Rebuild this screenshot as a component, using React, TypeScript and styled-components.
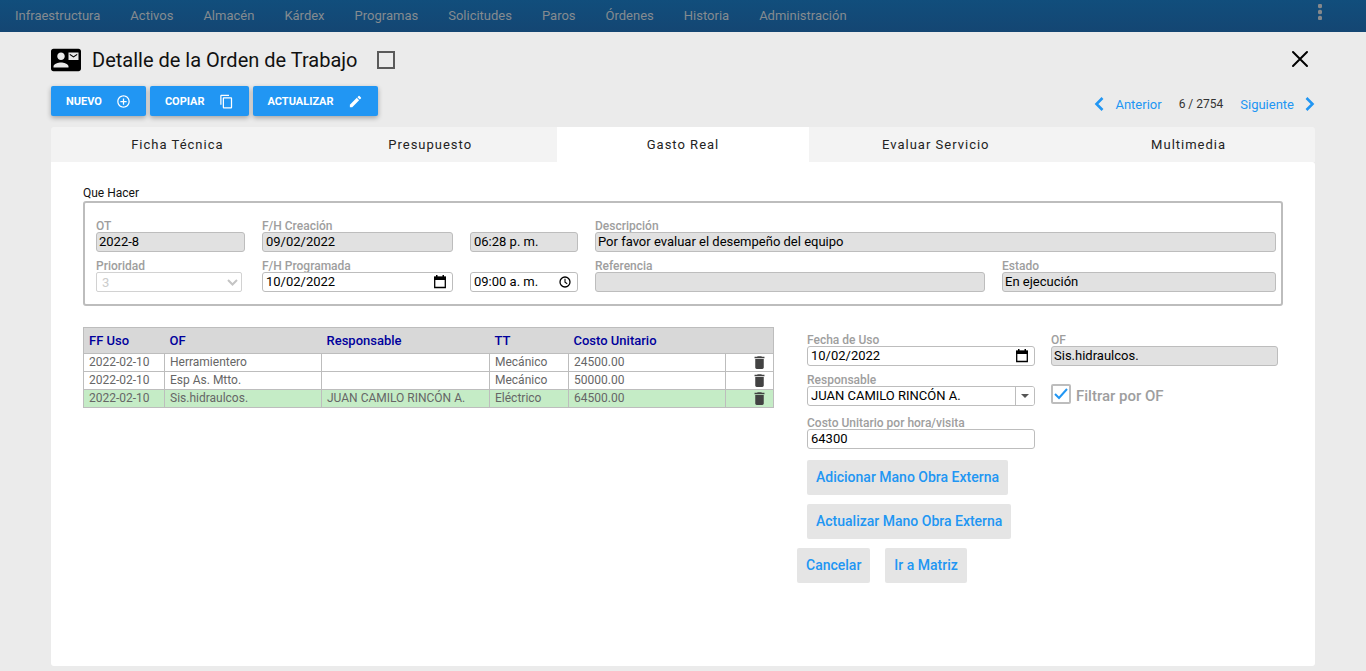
import React from "react";
import styled, { createGlobalStyle } from "styled-components";
import {
  MdContactMail,
  MdContentCopy,
  MdControlPoint,
  MdDelete,
  MdEdit,
} from "react-icons/md";

const GlobalStyle = createGlobalStyle`
  *, *::before, *::after { box-sizing: border-box; }
  body {
    margin: 0;
    background: #ebebeb;
    color: #111;
    font-family: Roboto, "Liberation Sans", sans-serif;
    font-size: 13px;
  }
  button, input, select { font-family: inherit; margin: 0; }
`;

const Page = styled.div`
  display: flex;
  flex-direction: column;
  min-height: 100vh;
`;

const NavBar = styled.nav`
  display: flex;
  align-items: center;
  gap: 30px;
  height: 32px;
  padding: 0 43px 0 15px;
  background: linear-gradient(#114e7c, #144673);
`;

const NavLink = styled.a`
  color: #858b90;
  font-weight: 400;
  line-height: 16px;
  text-decoration: none;
  white-space: nowrap;
`;

const MoreButton = styled.button`
  display: flex;
  align-self: flex-start;
  margin-left: auto;
  padding: 4px 1px;
  border: 0;
  background: none;
  color: #85888b;
`;

const Main = styled.main`
  display: flex;
  flex: 1;
  flex-direction: column;
  padding: 12px 51px 5px;
`;

const TitleRow = styled.header`
  display: flex;
  align-items: center;
  height: 32px;
`;

const Title = styled.h1`
  margin: 0 20px 0 11px;
  font-size: 20px;
  font-weight: 400;
  line-height: 24px;
`;

const TitleCheck = styled.input`
  appearance: none;
  width: 18px;
  height: 18px;
  border: 2px solid #5a5a5a;
`;

const CloseButton = styled.button`
  display: flex;
  margin-left: auto;
  padding: 4px 6px 7px;
  border: 0;
  background: none;
  color: #000;
`;

const Toolbar = styled.div`
  display: flex;
  align-items: flex-end;
  gap: 4px;
  margin: 10px 0 11px;
`;

const ActionButton = styled.button`
  display: flex;
  align-items: center;
  gap: 14px;
  height: 30px;
  padding: 0 15px;
  border: 0;
  border-radius: 2px;
  background: #2196f3;
  box-shadow: 0 2px 5px rgba(0, 0, 0, 0.3);
  color: #fff;
  font-size: 11px;
  font-weight: 700;
  text-transform: uppercase;
`;

const Pager = styled.div`
  display: flex;
  align-items: center;
  gap: 17px;
  height: 24px;
  margin-left: auto;
`;

const PagerLink = styled.a`
  display: flex;
  align-items: center;
  gap: 11px;
  color: #2196f3;
  font-size: 13px;
  font-weight: 400;
  text-decoration: none;
`;

const PagerCount = styled.span`
  color: #333;
  font-size: 12px;
`;

const TabBar = styled.div`
  display: grid;
  grid-template-columns: repeat(5, 1fr);
  height: 35px;
  overflow: hidden;
  border-radius: 3px 3px 0 0;
  background: #f3f3f3;
`;

const Tab = styled.button<{ $active?: boolean }>`
  border: 0;
  background: ${(p) => (p.$active ? "#fff" : "transparent")};
  color: #222;
  font-size: 13px;
  letter-spacing: 1px;
`;

const Panel = styled.section`
  flex: 1;
  padding: 24px 32px;
  border-radius: 0 3px 3px 3px;
  background: #fff;
`;

const GroupTitle = styled.h2`
  margin: 0 0 1px;
  font-size: 12px;
  font-weight: 400;
  line-height: 14px;
`;

const OrderBox = styled.div`
  display: grid;
  grid-template-columns: 149px 191px 108px minmax(0, 390fr) minmax(0, 274fr);
  gap: 7px 17px;
  align-items: end;
  padding: 16px 5px 12px 11px;
  border: 2px solid #bdbdbd;
  border-radius: 3px;
`;

const Field = styled.div<{ $wide?: boolean }>`
  display: flex;
  flex-direction: column;
  grid-column: ${(p) => (p.$wide ? "span 2" : "auto")};
  min-width: 0;
`;

const Label = styled.label`
  height: 13px;
  color: #9e9e9e;
  font-size: 12px;
  font-weight: 500;
  line-height: 15px;
`;

const Control = styled.div<{ $filled?: boolean }>`
  display: flex;
  align-items: center;
  height: 20px;
  overflow: hidden;
  border: 1px solid #bdbdbd;
  border-radius: 3px;
  background: ${(p) => (p.$filled ? "#e1e1e1" : "#fff")};
`;

const TextInput = styled.input<{ $indent?: boolean }>`
  flex: 1;
  min-width: 0;
  height: 18px;
  padding: 0 ${(p) => (p.$indent ? 3 : 2)}px 2px;
  border: 0;
  outline: 0;
  background: transparent;
  color: #000;
  font-size: 13px;
`;

const PickerButton = styled.button`
  display: flex;
  padding: 0 5px 1px;
  border: 0;
  background: none;
  color: #000;
`;

const DropButton = styled.button`
  display: flex;
  align-items: center;
  justify-content: center;
  width: 19px;
  height: 18px;
  padding: 0;
  border: 0;
  border-left: 1px solid #bdbdbd;
  background: #fff;
  color: #555;
`;

const PriorityControl = styled.div`
  display: grid;
  align-items: center;
  width: 146px;
  color: #c4c4c4;

  > * { grid-area: 1 / 1; }
  > svg { justify-self: end; margin-right: 4px; }
`;

const PrioritySelect = styled.select`
  appearance: none;
  width: 100%;
  height: 20px;
  padding: 0 5px;
  border: 1px solid #d2d2d2;
  border-radius: 2px;
  background: #fff;
  color: #ccc;
  font-size: 13px;
  opacity: 1;
`;

const Costs = styled.div`
  display: grid;
  grid-template-columns: minmax(0, 1fr) 228px 227px;
  align-items: start;
  column-gap: 16px;
  margin-top: 21px;
  padding-right: 5px;
`;

const TableWrap = styled.div`
  padding-right: 18px;
`;

const CostTable = styled.table`
  width: 100%;
  border: 1px solid #bdbdbd;
  border-collapse: collapse;
  table-layout: fixed;
`;

const HeadCell = styled.th<{ $width: number }>`
  width: ${(p) => p.$width}px;
  height: 26px;
  padding: 0 5px;
  background: #d8d8d8;
  color: #00009c;
  font-size: 13px;
  font-weight: 500;
  text-align: left;
`;

const Row = styled.tr<{ $selected?: boolean }>`
  background: ${(p) => (p.$selected ? "#c5ecc6" : "#fff")};
`;

const Cell = styled.td`
  height: 18px;
  padding: 0 5px 1px;
  overflow: hidden;
  border: 1px solid #bdbdbd;
  color: #666;
  font-size: 12px;
  line-height: 16px;
  white-space: nowrap;
`;

const ActionCell = styled(Cell)`
  padding: 0 5px;
`;

const DeleteButton = styled.button`
  display: flex;
  margin-left: auto;
  padding: 0;
  border: 0;
  background: none;
  color: #424242;
`;

const FormColumn = styled.form`
  display: flex;
  flex-direction: column;
  gap: 7px;
  padding-top: 6px;
`;

const SideColumn = styled.div`
  display: flex;
  flex-direction: column;
  gap: 18px;
  padding-top: 6px;
`;

const CostField = styled(Field)`
  margin-top: 3px;
`;

const FilterRow = styled.label`
  display: flex;
  align-items: flex-start;
  gap: 5px;
  color: #9e9e9e;
  font-size: 15px;
  font-weight: 500;
  line-height: 24px;
`;

const FilterBox = styled.span`
  display: grid;
  place-items: center;
  color: #2196f3;

  > * { grid-area: 1 / 1; }
  > svg { pointer-events: none; }
`;

const FilterCheck = styled.input`
  appearance: none;
  width: 20px;
  height: 20px;
  border: 2px solid #bdbdbd;
  border-radius: 2px;
`;

const Buttons = styled.div`
  display: flex;
  flex-direction: column;
  align-items: flex-start;
  gap: 9px;
  margin-top: 4px;
`;

const ButtonPair = styled.div`
  display: flex;
  gap: 15px;
  margin-left: -10px;
`;

const FlatButton = styled.button`
  height: 35px;
  padding: 0 9px 2px;
  border: 0;
  border-radius: 2px;
  background: #e5e5e5;
  color: #2196f3;
  font-size: 14px;
  font-weight: 500;
  white-space: nowrap;
`;

const CalendarIcon = () => (
  <svg width="14" height="14" viewBox="0 0 14 14" fill="none" aria-hidden="true">
    <path d="M1.7 2.5h10.6v10H1.7z" stroke="currentColor" strokeWidth="1.3" />
    <path d="M1 1.6h12V5H1zM3 0h1.5v2H3zM9.500 0H11v2H9.500z" fill="currentColor" />
  </svg>
);

const ClockIcon = () => (
  <svg width="14" height="14" viewBox="0 0 14 14" fill="none" stroke="currentColor" aria-hidden="true">
    <circle cx="7" cy="7" r="5" strokeWidth="1.3" />
    <path d="M7 3.800V7.300l2.200 1.400" strokeWidth="1.1" />
  </svg>
);

const Chevron = ({ right }: { right?: boolean }) => (
  <svg width="10" height="14" viewBox="0 0 10 14" fill="none" stroke="currentColor" strokeWidth="2.600" aria-hidden="true">
    <path d={right ? "M1.500 1l6 6-6 6" : "M8.500 1l-6 6 6 6"} />
  </svg>
);

const NAV = [
  "Infraestructura", "Activos", "Almacén", "Kárdex", "Programas",
  "Solicitudes", "Paros", "Órdenes", "Historia", "Administración",
];

const TABS = ["Ficha Técnica", "Presupuesto", "Gasto Real", "Evaluar Servicio", "Multimedia"];

const COLUMNS = [
  { name: "FF Uso", width: 81 },
  { name: "OF", width: 157 },
  { name: "Responsable", width: 168 },
  { name: "TT", width: 79 },
  { name: "Costo Unitario", width: 157 },
  { name: "", width: 48 },
];

const ROWS = [
  ["2022-02-10", "Herramientero", "", "Mecánico", "24500.00"],
  ["2022-02-10", "Esp As. Mtto.", "", "Mecánico", "50000.00"],
  ["2022-02-10", "Sis.hidraulcos.", "JUAN CAMILO RINCÓN A.", "Eléctrico", "64500.00"],
];

type TextFieldProps = {
  id: string;
  label?: string;
  name?: string;
  value: string;
  filled?: boolean;
  wide?: boolean;
  indent?: boolean;
  picker?: "calendar" | "clock";
};

function TextField({ id, label, name, value, filled, wide, indent, picker }: TextFieldProps) {
  return (
    <Field $wide={wide}>
      {label && <Label htmlFor={id}>{label}</Label>}
      <Control $filled={filled}>
        <TextInput
          id={id}
          type="text"
          aria-label={name}
          defaultValue={value}
          readOnly={filled}
          $indent={indent}
        />
        {picker && (
          <PickerButton type="button" aria-label={picker === "clock" ? "Elegir hora" : "Elegir fecha"}>
            {picker === "clock" ? <ClockIcon /> : <CalendarIcon />}
          </PickerButton>
        )}
      </Control>
    </Field>
  );
}

export default function App() {
  return (
    <Page>
      <GlobalStyle />
      <NavBar>
        {NAV.map((item) => (
          <NavLink key={item} href="#">{item}</NavLink>
        ))}
        <MoreButton aria-label="Más opciones">
          <svg width="4" height="16" viewBox="0 0 4 16" fill="currentColor" aria-hidden="true">
            <circle cx="2" cy="2" r="2.200" />
            <circle cx="2" cy="8" r="2.200" />
            <circle cx="2" cy="14" r="2.200" />
          </svg>
        </MoreButton>
      </NavBar>

      <Main>
        <TitleRow>
          <MdContactMail size={30} color="#000" aria-hidden="true" />
          <Title>Detalle de la Orden de Trabajo</Title>
          <TitleCheck type="checkbox" aria-label="Seleccionar orden" />
          <CloseButton aria-label="Cerrar">
            <svg width="18" height="18" viewBox="0 0 18 18" fill="none" stroke="currentColor" strokeWidth="2" strokeLinecap="round" aria-hidden="true">
              <path d="M2 2l14 14M16 2L2 16" />
            </svg>
          </CloseButton>
        </TitleRow>

        <Toolbar>
          <ActionButton>Nuevo<MdControlPoint size={15} /></ActionButton>
          <ActionButton>Copiar<MdContentCopy size={15} /></ActionButton>
          <ActionButton>Actualizar<MdEdit size={15} /></ActionButton>
          <Pager>
            <PagerLink href="#"><Chevron />Anterior</PagerLink>
            <PagerCount>6 / 2754</PagerCount>
            <PagerLink href="#">Siguiente<Chevron right /></PagerLink>
          </Pager>
        </Toolbar>

        <TabBar role="tablist">
          {TABS.map((tab) => (
            <Tab key={tab} role="tab" aria-selected={tab === "Gasto Real"} $active={tab === "Gasto Real"}>
              {tab}
            </Tab>
          ))}
        </TabBar>

        <Panel>
          <GroupTitle>Que Hacer</GroupTitle>
          <OrderBox>
            <TextField id="ot" label="OT" value="2022-8" filled />
            <TextField id="created" label="F/H Creación" value="09/02/2022" filled indent />
            <TextField id="created-time" name="Hora de creación" value="06:28 p. m." filled indent />
            <TextField id="description" label="Descripción" value="Por favor evaluar el desempeño del equipo" filled wide />
            <Field>
              <Label htmlFor="priority">Prioridad</Label>
              <PriorityControl>
                <PrioritySelect id="priority" defaultValue="3" disabled>
                  <option>3</option>
                </PrioritySelect>
                <svg width="11" height="7" viewBox="0 0 11 7" fill="none" stroke="currentColor" strokeWidth="2" aria-hidden="true">
                  <path d="M1 1l4.500 4.500L10 1" />
                </svg>
              </PriorityControl>
            </Field>
            <TextField id="planned" label="F/H Programada" value="10/02/2022" indent picker="calendar" />
            <TextField id="planned-time" name="Hora programada" value="09:00 a. m." indent picker="clock" />
            <TextField id="reference" label="Referencia" value="" filled />
            <TextField id="status" label="Estado" value="En ejecución" filled />
          </OrderBox>

          <Costs>
            <TableWrap>
              <CostTable>
                <thead>
                  <tr>
                    {COLUMNS.map((col) => (
                      <HeadCell key={col.name} $width={col.width}>{col.name}</HeadCell>
                    ))}
                  </tr>
                </thead>
                <tbody>
                  {ROWS.map((row, i) => (
                    <Row key={row[1]} $selected={i === 2}>
                      {row.map((text, j) => (
                        <Cell key={j}>{text}</Cell>
                      ))}
                      <ActionCell>
                        <DeleteButton aria-label="Eliminar"><MdDelete size={17} /></DeleteButton>
                      </ActionCell>
                    </Row>
                  ))}
                </tbody>
              </CostTable>
            </TableWrap>

            <FormColumn>
              <TextField id="use-date" label="Fecha de Uso" value="10/02/2022" indent picker="calendar" />
              <Field>
                <Label htmlFor="responsible">Responsable</Label>
                <Control>
                  <TextInput id="responsible" type="text" defaultValue="JUAN CAMILO RINCÓN A." $indent />
                  <DropButton type="button" aria-label="Ver responsables">
                    <svg width="8" height="4" viewBox="0 0 8 4" fill="currentColor" aria-hidden="true">
                      <path d="M0 0h8L4 4z" />
                    </svg>
                  </DropButton>
                </Control>
              </Field>
              <CostField>
                <Label htmlFor="unit-cost">Costo Unitario por hora/visita</Label>
                <Control>
                  <TextInput id="unit-cost" type="text" defaultValue="64300" $indent />
                </Control>
              </CostField>
              <Buttons>
                <FlatButton type="button">Adicionar Mano Obra Externa</FlatButton>
                <FlatButton type="button">Actualizar Mano Obra Externa</FlatButton>
                <ButtonPair>
                  <FlatButton type="button">Cancelar</FlatButton>
                  <FlatButton type="button">Ir a Matriz</FlatButton>
                </ButtonPair>
              </Buttons>
            </FormColumn>

            <SideColumn>
              <TextField id="of" label="OF" value="Sis.hidraulcos." filled />
              <FilterRow>
                <FilterBox>
                  <FilterCheck type="checkbox" defaultChecked />
                  <svg width="14" height="12" viewBox="0 0 14 12" fill="none" stroke="currentColor" strokeWidth="2" aria-hidden="true">
                    <path d="M1 6l4 4 8-9" />
                  </svg>
                </FilterBox>
                Filtrar por OF
              </FilterRow>
            </SideColumn>
          </Costs>
        </Panel>
      </Main>
    </Page>
  );
}
